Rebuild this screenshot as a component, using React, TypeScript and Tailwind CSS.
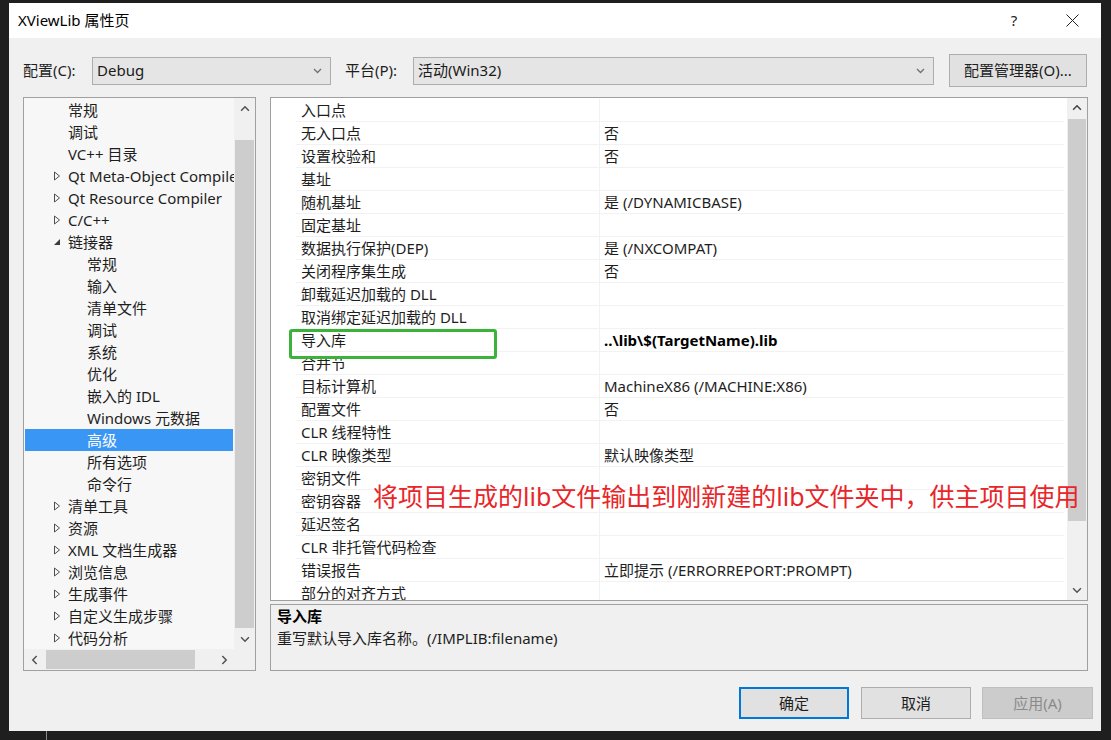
import React from "react";

type TreeItem = { label: string; level: 0 | 1; arrow?: "closed" | "open"; selected?: boolean };

const tree: TreeItem[] = [
  { label: "常规", level: 0 },
  { label: "调试", level: 0 },
  { label: "VC++ 目录", level: 0 },
  { label: "Qt Meta-Object Compiler", level: 0, arrow: "closed" },
  { label: "Qt Resource Compiler", level: 0, arrow: "closed" },
  { label: "C/C++", level: 0, arrow: "closed" },
  { label: "链接器", level: 0, arrow: "open" },
  { label: "常规", level: 1 },
  { label: "输入", level: 1 },
  { label: "清单文件", level: 1 },
  { label: "调试", level: 1 },
  { label: "系统", level: 1 },
  { label: "优化", level: 1 },
  { label: "嵌入的 IDL", level: 1 },
  { label: "Windows 元数据", level: 1 },
  { label: "高级", level: 1, selected: true },
  { label: "所有选项", level: 1 },
  { label: "命令行", level: 1 },
  { label: "清单工具", level: 0, arrow: "closed" },
  { label: "资源", level: 0, arrow: "closed" },
  { label: "XML 文档生成器", level: 0, arrow: "closed" },
  { label: "浏览信息", level: 0, arrow: "closed" },
  { label: "生成事件", level: 0, arrow: "closed" },
  { label: "自定义生成步骤", level: 0, arrow: "closed" },
  { label: "代码分析", level: 0, arrow: "closed" },
];

const props: [string, string, boolean?][] = [
  ["入口点", ""],
  ["无入口点", "否"],
  ["设置校验和", "否"],
  ["基址", ""],
  ["随机基址", "是 (/DYNAMICBASE)"],
  ["固定基址", ""],
  ["数据执行保护(DEP)", "是 (/NXCOMPAT)"],
  ["关闭程序集生成", "否"],
  ["卸载延迟加载的 DLL", ""],
  ["取消绑定延迟加载的 DLL", ""],
  ["导入库", "..\\lib\\$(TargetName).lib", true],
  ["合并节", ""],
  ["目标计算机", "MachineX86 (/MACHINE:X86)"],
  ["配置文件", "否"],
  ["CLR 线程特性", ""],
  ["CLR 映像类型", "默认映像类型"],
  ["密钥文件", ""],
  ["密钥容器", ""],
  ["延迟签名", ""],
  ["CLR 非托管代码检查", ""],
  ["错误报告", "立即提示 (/ERRORREPORT:PROMPT)"],
  ["部分的对齐方式", ""],
];

function Chevron({ dir, color = "#606060", size = 9 }: { dir: "up" | "down" | "left" | "right"; color?: string; size?: number }) {
  const d =
    dir === "up"
      ? "M1 6 L4.5 2.5 L8 6"
      : dir === "down"
      ? "M1 3 L4.5 6.5 L8 3"
      : dir === "left"
      ? "M6 1 L2.5 4.5 L6 8"
      : "M3 1 L6.5 4.5 L3 8";
  return (
    <svg width={size} height={size} viewBox="0 0 9 9" fill="none">
      <path d={d} stroke={color} strokeWidth="1.3" />
    </svg>
  );
}

function Dropdown({ value, width }: { value: string; width: string }) {
  return (
    <div className={`${width} h-[28px] bg-[#e5e5e5] border border-[#adadad] flex items-center pl-[4px] pr-[8px]`}>
      <span className="flex-1 text-[15px] text-[#1a1a1a]">{value}</span>
      <Chevron dir="down" color="#707070" size={9} />
    </div>
  );
}

function TreeArrow({ kind }: { kind: "closed" | "open" }) {
  if (kind === "open") {
    return (
      <svg width="8" height="8" viewBox="0 0 8 8">
        <path d="M7 1 L7 7 L1 7 Z" fill="#3c3c3c" />
      </svg>
    );
  }
  return (
    <svg width="8" height="10" viewBox="0 0 8 10">
      <path d="M1.5 1 L6.5 5 L1.5 9 Z" fill="none" stroke="#505050" strokeWidth="1" />
    </svg>
  );
}

export default function App() {
  return (
    <div className="relative w-[1111px] h-[740px] bg-[#1f1f1f] pt-[3px] pl-[9px] pr-[10px] pb-[9px] font-['Noto_Sans','Noto_Sans_CJK_SC',sans-serif] text-[#1e1e1e]">
      <div className="w-full h-full flex flex-col">
        {/* title bar */}
        <div className="h-[35px] bg-white flex items-center pl-[9px]">
          <span className="text-[15px] text-black flex-1">XViewLib 属性页</span>
          <div className="w-[58px] h-full flex items-center justify-center text-[15px] text-[#222]">?</div>
          <div className="w-[58px] h-full flex items-center justify-center">
            <svg width="13" height="13" viewBox="0 0 13 13">
              <path d="M0.5 0.5 L12.5 12.5 M12.5 0.5 L0.5 12.5" stroke="#222" strokeWidth="1" />
            </svg>
          </div>
        </div>

        {/* body */}
        <div className="flex-1 bg-[#f0f0f0] flex flex-col pt-[16px] pb-[12px]">
          {/* configuration row */}
          <div className="h-[33px] flex items-center pl-[14px] pr-[14px]">
            <span className="w-[69px] text-[15px]">配置(C):</span>
            <Dropdown value="Debug" width="w-[239px]" />
            <span className="w-[68px] ml-[14px] text-[15px]">平台(P):</span>
            <Dropdown value="活动(Win32)" width="w-[521px]" />
            <div className="ml-[15px] w-[138px] h-[33px] bg-[#e1e1e1] border border-[#adadad] flex items-center justify-center text-[15px]">
              配置管理器(O)...
            </div>
          </div>

          {/* main area */}
          <div className="mt-[10px] h-[574px] flex gap-[14px] pl-[14px] pr-[13px]">
            {/* tree */}
            <div className="w-[233px] h-full border border-[#a0a0a0] bg-[#f7f7f7] flex flex-col">
              <div className="flex-1 flex min-h-0">
                <div className="flex-1 overflow-hidden pt-[1px]">
                  {tree.map((t, i) => (
                    <div
                      key={i}
                      className={`h-[22px] flex items-center whitespace-nowrap text-[15px] ${
                        t.selected ? "bg-[#3a96f5] text-white mx-[1px]" : ""
                      }`}
                    >
                      <div className={`${t.selected ? "w-[28px]" : "w-[29px]"} flex-none`} />
                      <div className="w-[15px] flex-none flex items-center">
                        {t.arrow ? <TreeArrow kind={t.arrow} /> : null}
                      </div>
                      {t.level === 1 ? <div className="w-[19px] flex-none" /> : null}
                      <span>{t.label}</span>
                    </div>
                  ))}
                </div>
                {/* vertical scrollbar */}
                <div className="w-[21px] bg-[#f0f0f0] flex flex-col">
                  <div className="h-[21px] flex items-center justify-center">
                    <Chevron dir="up" color="#505050" size={10} />
                  </div>
                  <div className="flex-1 flex flex-col pt-[21px] px-[1px]">
                    <div className="flex-1 bg-[#cdcdcd]" />
                  </div>
                  <div className="h-[21px] flex items-center justify-center">
                    <Chevron dir="down" color="#505050" size={10} />
                  </div>
                </div>
              </div>
              {/* horizontal scrollbar */}
              <div className="h-[21px] flex bg-[#f0f0f0]">
                <div className="w-[21px] flex items-center justify-center">
                  <Chevron dir="left" color="#505050" size={10} />
                </div>
                <div className="flex-1 flex items-stretch py-[1px] pl-[1px]">
                  <div className="w-[149px] bg-[#cdcdcd]" />
                </div>
                <div className="w-[21px] flex items-center justify-center">
                  <Chevron dir="right" color="#505050" size={10} />
                </div>
                <div className="w-[21px] bg-[#f0f0f0]" />
              </div>
            </div>

            {/* property grid + description */}
            <div className="flex-1 flex flex-col gap-[3px]">
              <div className="relative h-[504px] border border-[#a0a0a0] bg-white flex">
                <div className="flex-1 overflow-hidden pt-[1px]">
                  {props.map(([name, value, bold], i) => (
                    <div key={i} className="h-[23px] flex">
                      <div className="w-[25px] flex-none" />
                      <div className="flex-1 flex border-b border-[#f2f2f2] mr-[3px]">
                        <div className="w-[304px] flex-none flex items-center pl-[5px] border-r border-[#f2f2f2] text-[15px] whitespace-nowrap">
                          {name}
                        </div>
                        <div className={`flex-1 flex items-center pl-[4px] text-[15px] whitespace-nowrap ${bold ? "font-bold text-black" : ""}`}>
                          {value}
                        </div>
                      </div>
                    </div>
                  ))}
                </div>
                {/* vertical scrollbar */}
                <div className="w-[20px] bg-[#f0f0f0] flex flex-col">
                  <div className="h-[20px] flex items-center justify-center">
                    <Chevron dir="up" color="#404040" size={10} />
                  </div>
                  <div className="flex-1 flex flex-col pt-[1px] pb-[59px] px-[1px]">
                    <div className="flex-1 bg-[#cdcdcd]" />
                  </div>
                  <div className="h-[20px] flex items-center justify-center">
                    <Chevron dir="down" color="#505050" size={10} />
                  </div>
                </div>

                {/* highlight around the edited property */}
                <div className="absolute left-[18px] top-[231px] w-[208px] h-[30px] border-[3px] border-[#3db23a] rounded-[3px]" />
                {/* note */}
                <div className="absolute left-[102px] top-[386px] text-[25px] leading-[25px] text-[#e8262a] whitespace-nowrap">
                  将项目生成的lib文件输出到刚新建的lib文件夹中，供主项目使用
                </div>
              </div>

              {/* description */}
              <div className="flex-1 border border-[#a0a0a0] bg-[#f0f0f0] pl-[6px] text-[15px]">
                <div className="h-[22px] flex items-center font-bold text-black">导入库</div>
                <div className="h-[22px] flex items-center">重写默认导入库名称。(/IMPLIB:filename)</div>
              </div>
            </div>
          </div>

          {/* buttons */}
          <div className="mt-[16px] h-[32px] flex justify-end pr-[8px]">
            <div className="w-[110px] h-[32px] border-2 border-[#0078d7] bg-[#e1e1e1] flex items-center justify-center text-[15px]">
              确定
            </div>
            <div className="ml-[12px] w-[110px] h-[32px] border border-[#adadad] bg-[#e1e1e1] flex items-center justify-center text-[15px]">
              取消
            </div>
            <div className="ml-[11px] w-[111px] h-[32px] border border-[#bfbfbf] bg-[#cccccc] flex items-center justify-center text-[15px] text-[#8a8a8a]">
              应用(A)
            </div>
          </div>
        </div>
      </div>
      {/* taskbar edge below the window */}
      <div className="absolute left-[46px] top-[731px] w-[1px] h-[9px] bg-[#8a8a8a]" />
    </div>
  );
}
